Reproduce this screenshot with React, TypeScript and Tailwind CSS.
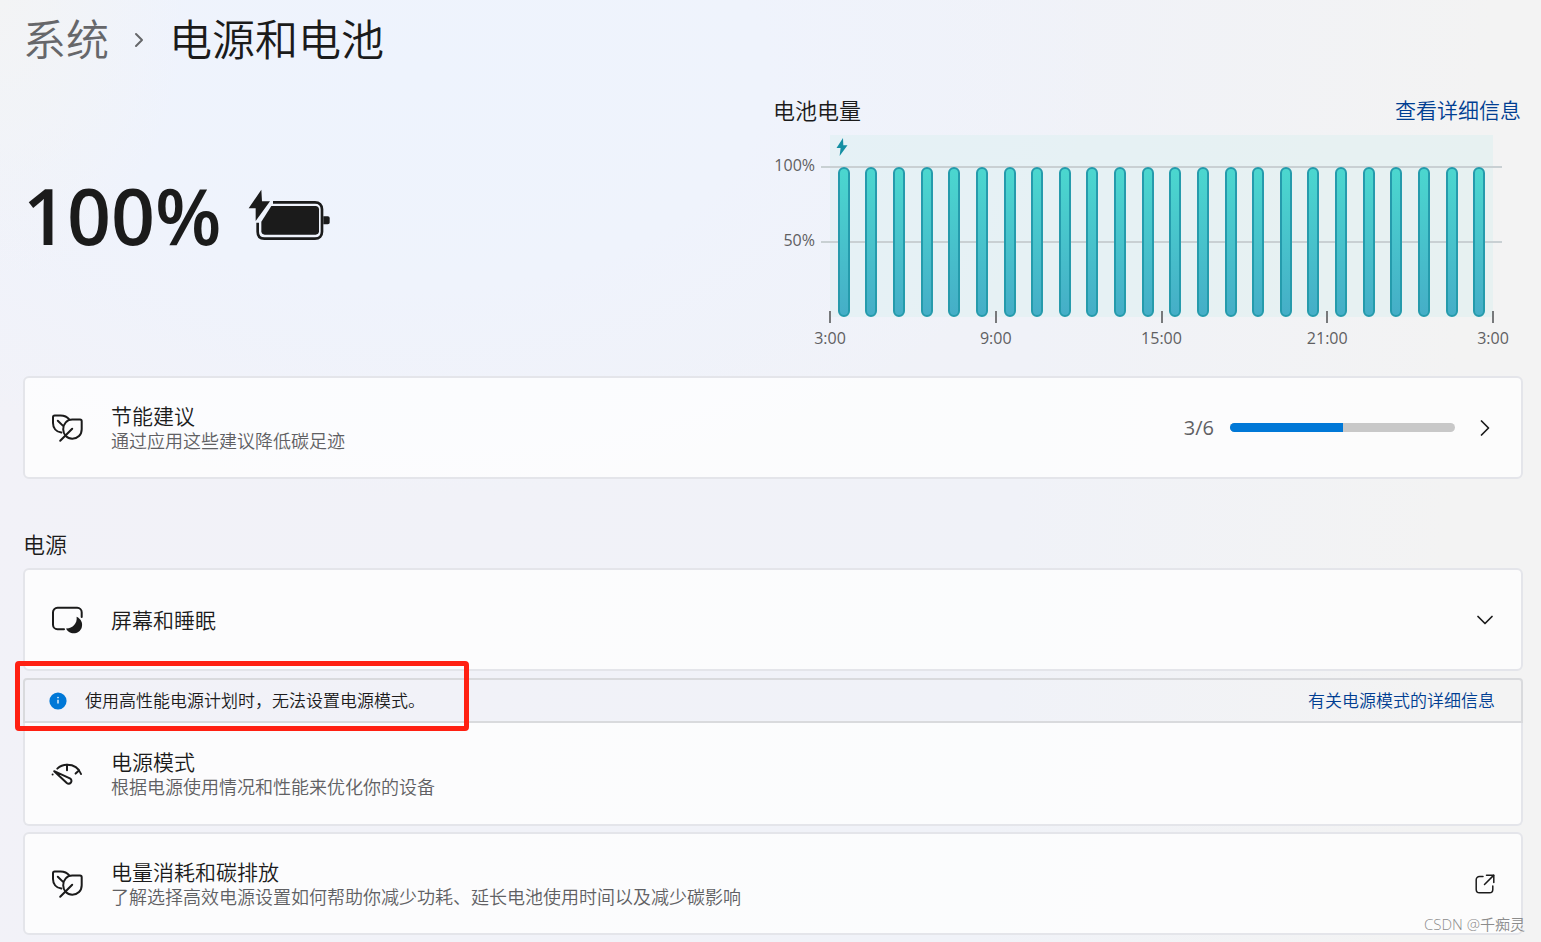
import { ReactNode } from "react";
import { ChevronDown, ChevronRight } from "lucide-react";

const HOURS = ["3:00", "9:00", "15:00", "21:00", "3:00"];
const LEVELS = Array.from({ length: 24 }, () => 100);

const LeafIcon = () => (
  <svg viewBox="0 0 32 32" className="size-8" fill="none" stroke="currentColor" strokeWidth="2" strokeLinecap="round" strokeLinejoin="round" aria-hidden="true">
    <path d="M10.3 20.6C5.2 19.8 2 16 2 11V5.2C2 4.2 2.7 3.5 3.7 3.5H9.5C13.2 3.5 16.4 5 18.2 7.4" />
    <path d="M21.3 7.6H29C30 7.6 30.7 8.3 30.7 9.3V17.3C30.7 22.8 26.7 26.7 21.3 26.7C16 26.7 12.2 22.6 12.2 17.3C12.2 11.8 16 7.6 21.3 7.6Z" />
    <path d="M6.8 8.8L11.8 13.6" />
    <path d="M9.2 28.7L21.2 16.7" />
  </svg>
);

const ScreenSleepIcon = () => (
  <svg viewBox="0 0 32 32" className="size-8" fill="none" stroke="currentColor" strokeWidth="2" strokeLinecap="round" aria-hidden="true">
    <path d="M13 25.2H6.5C4 25.2 2 23.2 2 20.7V8.3C2 5.8 4 3.8 6.5 3.8H26.2C28.7 3.8 30.7 5.8 30.7 8.3V13" />
    <path d="M25.6 12.8C30 14.8 32 19 30.8 23.2C29.4 28 24.5 30.3 20.2 29C17.8 28.2 16 26.6 15 24.4C21.6 24.6 26.5 19.6 25.6 12.8Z" fill="currentColor" stroke="none" />
  </svg>
);

const GaugeIcon = () => (
  <svg viewBox="0 0 32 32" className="size-8" fill="none" stroke="currentColor" strokeWidth="2" strokeLinecap="round" strokeLinejoin="round" aria-hidden="true">
    <path d="M6.3 10.6C9 8 12.3 6.7 16 6.7C22.3 6.7 27.8 10 30 16" />
    <path d="M16 6.7V12.2" />
    <path d="M24.6 15.6L28 12.4" />
    <path d="M3.2 13.2L18.9 20.3C20.5 21.2 20.9 23 20 24.4C19.1 25.8 17.2 26.1 15.8 25L3.2 13.2Z" />
    <path d="M1.6 16.4V16.5" />
  </svg>
);

const OpenIcon = () => (
  <svg viewBox="0 0 20 20" className="mx-1 size-5" fill="none" stroke="currentColor" strokeWidth="1.5" strokeLinecap="round" strokeLinejoin="round" aria-hidden="true">
    <path d="M8 2.5H4.5C2.6 2.5 1.2 3.9 1.2 5.8V15.5C1.2 17.4 2.6 18.8 4.5 18.8H14.5C16.4 18.8 17.8 17.4 17.8 15.5V12" />
    <path d="M11.5 1.2H18.8V8.5" />
    <path d="M18.6 1.4L9.5 10.5" />
  </svg>
);

const BatteryIcon = () => (
  <svg viewBox="24 26 249 156" className="h-13 w-[83px]" fill="currentColor" aria-hidden="true">
    <path d="M64 28L26 84H47V122L90 63H66Z" />
    <path d="M99 66H225C238 66 246 74 246 87V154C246 167 238 175 225 175H73C60 175 53 167 53 154V127" fill="none" stroke="currentColor" strokeWidth="8" />
    <path d="M94 77H227C233 77 237 81 237 87V153C237 159 233 163 227 163H74C68 163 64 159 64 153V124Z" />
    <path d="M250 108H263C267 108 269 110 269 114V126C269 130 267 132 263 132H250Z" />
  </svg>
);

const BatteryChart = () => (
  <section>
    <div className="flex items-center justify-between leading-8">
      <h2 className="text-[22px]">电池电量</h2>
      <a href="#usage" className="mr-0.5 text-[21px] text-[#003e92]">查看详细信息</a>
    </div>
    <div className="mt-[9px] flex pr-[30px] text-base font-normal text-[#5f5f62]">
      <div className="flex w-[57px] flex-col gap-[51px] pr-[15px] pt-[18px] text-right leading-6">
        <span>100%</span>
        <span>50%</span>
      </div>
      <div className="flex-1">
        <div className="relative flex h-[182px] items-end bg-[#d9eff0]/45">
          <svg viewBox="0 0 12 18" className="absolute left-1.5 top-[3px] h-[18px] w-3 fill-[#158fa3]" aria-hidden="true">
            <path d="M7 0L0.5 10H4.6L3.6 18L11.5 7.3H7.3Z" />
          </svg>
          <div className="absolute -left-[9px] -right-[9px] top-[31px] h-0.5 bg-[#c9d0d3]" />
          <div className="absolute -left-[9px] -right-[9px] top-[106px] h-0.5 bg-[#c9d0d3]" />
          {LEVELS.map((level, i) => (
            <div key={i} className="relative flex h-[150px] flex-1 items-end justify-center">
              <div
                className="w-3 rounded-full border-2 border-[#259bac] bg-linear-to-b from-[#4bd7cf] to-[#45aec7]"
                style={{ height: `${level}%` }}
              />
            </div>
          ))}
        </div>
        <div className="relative -mt-1.5 flex justify-between">
          {HOURS.map((hour, i) => (
            <div key={i} className="flex w-0 flex-col items-center">
              <span className="h-3 w-0.5 bg-[#77797b]" />
              <span className="mt-[3px] leading-6">{hour}</span>
            </div>
          ))}
        </div>
      </div>
    </div>
  </section>
);

interface SettingRowProps {
  icon: ReactNode;
  title: string;
  description?: string;
  className?: string;
  children?: ReactNode;
}

const SettingRow = ({ icon, title, description, className = "rounded-md border-2", children }: SettingRowProps) => (
  <button type="button" className={`flex min-h-[103px] w-full items-center border-[#e4e5ea] bg-white/75 pl-[26px] pr-[22px] text-left ${className}`}>
    {icon}
    <span className="ml-7 flex flex-1 flex-col">
      <span className="text-[21px] leading-[26px]">{title}</span>
      {description && <span className="text-lg leading-6 text-[#606063]">{description}</span>}
    </span>
    {children}
  </button>
);

export default function App() {
  return (
    <div className="relative min-h-screen bg-[#f1f3f8] bg-[radial-gradient(ellipse_12%_30%_at_0%_0%,#f3f4f5_0%,transparent_100%),radial-gradient(ellipse_45%_45%_at_27%_8%,#eef3fd_0%,#eff3fc_50%,transparent_100%),linear-gradient(95deg,#f2f2f8_0%,#f0f2f8_65%,#f3f3f3_92%)] pb-[7px] pl-[23px] pr-[18px] font-['Open_Sans','Noto_Sans_CJK_SC',sans-serif] font-[350] text-[#1b1b1b]">
      <h1 className="flex h-20 items-center text-[43px]">
        <a href="#system" className="text-[#66676a]">系统</a>
        <ChevronRight className="mx-[18px] size-6 text-[#66676a]" strokeWidth={2} />
        <span>电源和电池</span>
      </h1>

      <div className="grid grid-cols-2 pt-3.5">
        <div className="flex items-center gap-[26px] pb-3.5">
          <span className="text-[77px] font-semibold leading-none">100%</span>
          <BatteryIcon />
        </div>
        <BatteryChart />
      </div>

      <main className="mt-[26px]">
        <SettingRow icon={<LeafIcon />} title="节能建议" description="通过应用这些建议降低碳足迹">
          <span className="text-xl font-normal text-[#606063]">3/6</span>
          <span role="progressbar" aria-label="节能建议" aria-valuenow={3} aria-valuemax={6} className="mx-4 h-[9px] w-[225px] overflow-hidden rounded-full bg-[#c8c8c8]">
            <span className="block h-full w-1/2 bg-[#0078d7]" />
          </span>
          <ChevronRight className="size-7" strokeWidth={1.5} />
        </SettingRow>

        <h2 className="mb-2 mt-[49px] text-[22px] leading-8">电源</h2>

        <SettingRow icon={<ScreenSleepIcon />} title="屏幕和睡眠">
          <ChevronDown className="size-7" strokeWidth={1.5} />
        </SettingRow>

        <div className="relative mt-[7px] flex h-[45px] items-center justify-between rounded-t border-2 border-[#d9dadd] pl-6 pr-[26px] text-[17px]">
          <p className="flex items-center gap-[18px]">
            <svg viewBox="0 0 18 18" className="size-[18px]" aria-hidden="true">
              <circle cx="9" cy="9" r="8.6" fill="#0078d7" />
              <path d="M9 7.8V11.6" stroke="#fff" strokeWidth="1.3" />
              <circle cx="9" cy="5.6" r="0.8" fill="#fff" />
            </svg>
            使用高性能电源计划时，无法设置电源模式。
          </p>
          <a href="#power-mode" className="text-[#003e92]">有关电源模式的详细信息</a>
          <div className="absolute -left-[10px] -top-[19px] h-[70px] w-[454px] rounded border-5 border-[#ff2012]" />
        </div>

        <SettingRow icon={<GaugeIcon />} title="电源模式" description="根据电源使用情况和性能来优化你的设备" className="rounded-b-md border-2 border-t-0" />

        <div className="mt-1.5">
          <SettingRow icon={<LeafIcon />} title="电量消耗和碳排放" description="了解选择高效电源设置如何帮助你减少功耗、延长电池使用时间以及减少碳影响">
            <OpenIcon />
          </SettingRow>
        </div>
      </main>

      <p className="absolute bottom-2 right-4 text-[15px] leading-5 text-[#8c8c8c]">CSDN @千痴灵</p>
    </div>
  );
}
